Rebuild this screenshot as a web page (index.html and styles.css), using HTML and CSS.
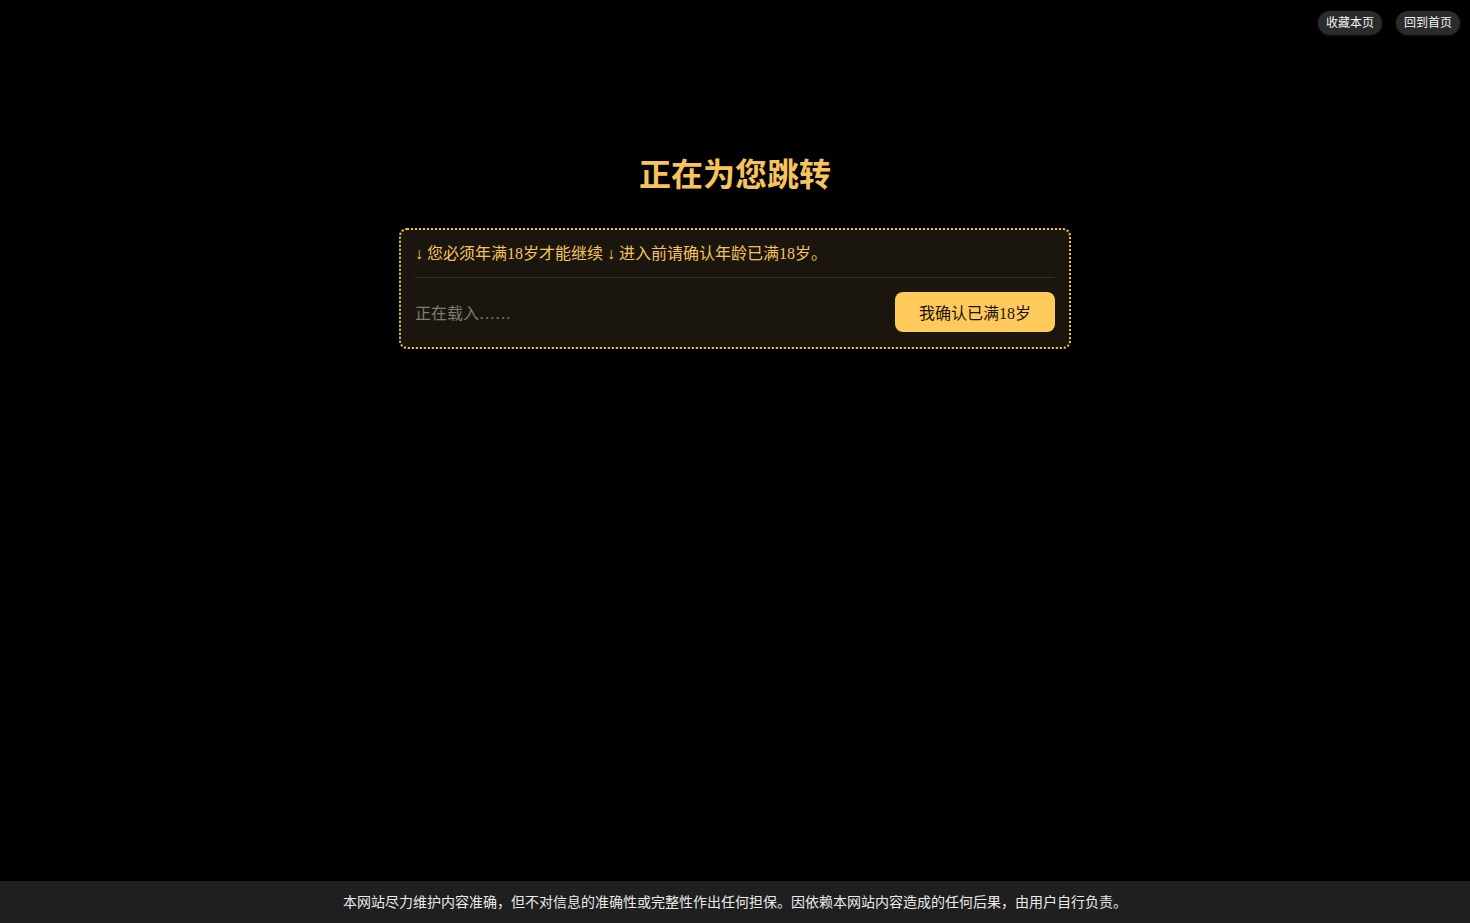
FILE: index.html
```html
<!DOCTYPE html>
<html lang="zh-CN">
<head>
<meta charset="utf-8">
<title>正在为您跳转</title>
<link rel="stylesheet" href="styles.css">
</head>
<body>
<div class="topbar">
  <a class="pill">收藏本页</a>
  <a class="pill">回到首页</a>
</div>
<main class="main">
  <h1 class="title">正在为您跳转</h1>
  <div class="card">
    <div class="notice">↓ 您必须年满18岁才能继续 ↓ 进入前请确认年龄已满18岁。</div>
    <div class="row">
      <span class="loading">正在载入……</span>
      <button class="confirm">我确认已满18岁</button>
    </div>
  </div>
</main>
<footer class="footer">本网站尽力维护内容准确，但不对信息的准确性或完整性作出任何担保。因依赖本网站内容造成的任何后果，由用户自行负责。</footer>
</body>
</html>
```
FILE: styles.css
```css
html, body { margin: 0; padding: 0; height: 100%; }
body {
  background: #000;
  font-family: "Liberation Sans", "Noto Sans CJK SC", sans-serif;
  color: #fff;
  display: flex;
  flex-direction: column;
  min-height: 100vh;
}
.topbar {
  display: flex;
  justify-content: flex-end;
  gap: 14px;
  padding: 11px 10px 0 0;
}
.pill {
  display: block;
  background: #2b2b2b;
  color: #f2f2f2;
  font-size: 12px;
  line-height: 24px;
  height: 24px;
  padding: 0 8px;
  border-radius: 12px;
  box-shadow: 0 1px 3px rgba(255,255,255,0.08);
}
.main {
  flex: 1;
  display: flex;
  flex-direction: column;
  align-items: center;
}
.title {
  margin: 117px 0 0;
  font-size: 32px;
  line-height: 40px;
  font-weight: bold;
  color: #f6c35c;
  font-family: "Noto Sans CJK SC", sans-serif;
}
.card {
  margin-top: 36px;
  width: 640px;
  padding: 13px 14px 15px;
  border: 2px dotted #f1c05d;
  border-radius: 8px;
  background: #1b160d;
  font-family: "Liberation Serif", "Noto Sans CJK SC", serif;
}
.notice {
  color: #f3c25e;
  font-size: 16px;
  line-height: 22px;
  padding-bottom: 12px;
  border-bottom: 1px solid #3a3325;
}
.row {
  display: flex;
  justify-content: space-between;
  align-items: center;
  padding-top: 14px;
}
.loading {
  color: #7d7a74;
  font-size: 16px;
}
.confirm {
  width: 160px;
  height: 40px;
  border: none;
  border-radius: 8px;
  background: #ffc95c;
  color: #1a1407;
  font-size: 16px;
  font-family: "Liberation Serif", "Noto Sans CJK SC", serif;
}
.footer {
  background: #1f1f1f;
  color: #eaeaea;
  font-size: 14px;
  height: 42px;
  line-height: 42px;
  text-align: center;
}
```
